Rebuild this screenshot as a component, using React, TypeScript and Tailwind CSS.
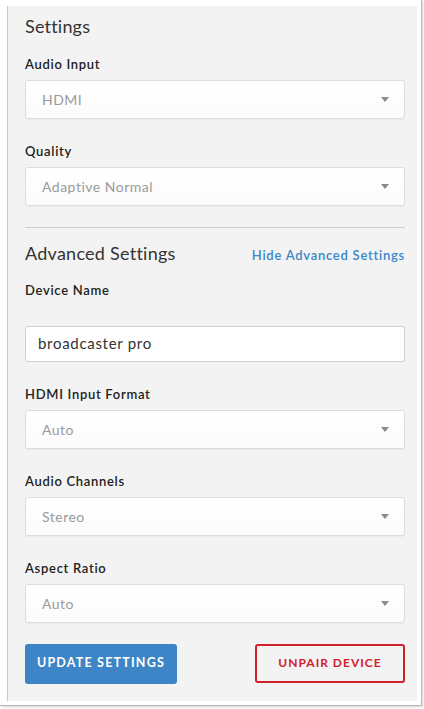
const font = { fontFamily: "Lato, 'Open Sans', sans-serif" };

function Select({ value }: { value: string }) {
  return (
    <div className="h-[39px] flex items-center justify-between pl-4 pr-[15px] rounded-[3px] border border-[#dddddd] bg-gradient-to-b from-white to-[#fbfbfb] shadow-[0_1px_1px_rgba(0,0,0,0.04)]">
      <span className="text-[14px] tracking-[0.5px] text-[#9a9a9a]">{value}</span>
      <span className="w-0 h-0 border-l-[4.5px] border-r-[4.5px] border-t-[5px] border-l-transparent border-r-transparent border-t-[#8a8a8a]" />
    </div>
  );
}

function Label({ children }: { children: string }) {
  return (
    <div className="h-[18px] leading-[18px] text-[13px] font-semibold tracking-[0.7px] text-[#222]">{children}</div>
  );
}

function Field({ label, value, first }: { label: string; value: string; first?: boolean }) {
  return (
    <div className={first ? "" : "mt-[23px]"}>
      <Label>{label}</Label>
      <div className="mt-[7px]">
        <Select value={value} />
      </div>
    </div>
  );
}

export default function App() {
  return (
    <div className="w-[424px] h-[709px] bg-white" style={font}>
      <div className="w-[422px] h-[706px] bg-white border-r border-b border-[#b9b9b9] shadow-[1px_1px_2px_rgba(0,0,0,0.18)] pt-[6px] pl-[7px] pr-[4px] pb-[4px]">
        <div className="h-full border-l border-[#c9c9c9] bg-[#f3f3f3] pl-[17px] pr-[12px] pt-[8px]">
          <h2 className="h-[24px] leading-[24px] text-[18px] tracking-[0.2px] text-[#333]">Settings</h2>

          <div className="mt-[17px]">
            <Field first label="Audio Input" value="HDMI" />
            <Field label="Quality" value="Adaptive Normal" />
          </div>

          <div className="mt-[21px] h-px bg-[#cfcfcf]" />

          <div className="mt-[13px] flex items-baseline justify-between">
            <h2 className="h-[24px] leading-[24px] text-[18px] tracking-[0.25px] text-[#333]">Advanced Settings</h2>
            <a className="text-[13px] font-semibold tracking-[0.75px] text-[#3a87c9] cursor-pointer">
              Hide Advanced Settings
            </a>
          </div>

          <div className="mt-[15px]">
            <Label>Device Name</Label>
          </div>
          <div className="mt-[27px] h-[36px] flex items-center px-3 rounded-[3px] border border-[#cfcfcf] bg-white">
            <span className="text-[15px] tracking-[0.7px] text-[#333]">broadcaster pro</span>
          </div>

          <Field label="HDMI Input Format" value="Auto" />
          <Field label="Audio Channels" value="Stereo" />
          <Field label="Aspect Ratio" value="Auto" />

          <div className="mt-[21px] flex justify-between items-start">
            <button className="w-[152px] h-[40px] rounded-[3px] bg-[#3d85c6] text-white text-[12.5px] font-bold tracking-[1.2px]">
              UPDATE SETTINGS
            </button>
            <button className="w-[150px] h-[39px] rounded-[3px] border-2 border-[#d0202c] text-[#d0202c] text-[12px] font-bold tracking-[1px]">
              UNPAIR DEVICE
            </button>
          </div>
        </div>
      </div>
    </div>
  );
}
